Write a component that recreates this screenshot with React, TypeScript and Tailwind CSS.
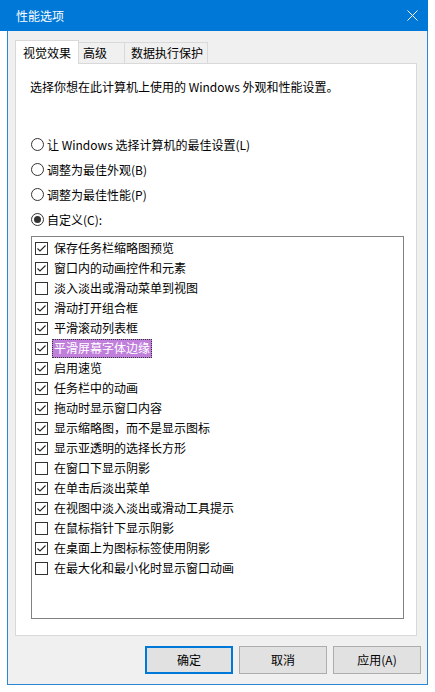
import React from 'react'

type Item = { label: string; checked: boolean; focused?: boolean }

const ITEMS: Item[] = [
  { label: '保存任务栏缩略图预览', checked: true },
  { label: '窗口内的动画控件和元素', checked: true },
  { label: '淡入淡出或滑动菜单到视图', checked: false },
  { label: '滑动打开组合框', checked: true },
  { label: '平滑滚动列表框', checked: true },
  { label: '平滑屏幕字体边缘', checked: true, focused: true },
  { label: '启用速览', checked: true },
  { label: '任务栏中的动画', checked: true },
  { label: '拖动时显示窗口内容', checked: true },
  { label: '显示缩略图，而不是显示图标', checked: true },
  { label: '显示亚透明的选择长方形', checked: true },
  { label: '在窗口下显示阴影', checked: false },
  { label: '在单击后淡出菜单', checked: true },
  { label: '在视图中淡入淡出或滑动工具提示', checked: true },
  { label: '在鼠标指针下显示阴影', checked: false },
  { label: '在桌面上为图标标签使用阴影', checked: true },
  { label: '在最大化和最小化时显示窗口动画', checked: false },
]

const RADIOS = [
  { label: '让 Windows 选择计算机的最佳设置(L)', selected: false },
  { label: '调整为最佳外观(B)', selected: false },
  { label: '调整为最佳性能(P)', selected: false },
  { label: '自定义(C):', selected: true },
]

function Checkbox({ checked }: { checked: boolean }) {
  return (
    <span className="flex h-[13px] w-[13px] shrink-0 items-center justify-center border border-[#333] bg-white">
      {checked && (
        <svg width="11" height="11" viewBox="0 0 11 11">
          <polyline points="1.5,5.5 4,8 9.5,2.5" fill="none" stroke="#222" strokeWidth="1.1" />
        </svg>
      )}
    </span>
  )
}

function Radio({ selected }: { selected: boolean }) {
  return (
    <span className="flex h-[13px] w-[13px] shrink-0 items-center justify-center rounded-full border border-[#333] bg-white">
      {selected && <span className="h-[7px] w-[7px] rounded-full bg-[#333]" />}
    </span>
  )
}

function Button({ children, primary }: { children: React.ReactNode; primary?: boolean }) {
  return (
    <button
      type="button"
      className={
        primary
          ? 'flex h-[28px] w-[88px] items-center justify-center border-2 border-[#0078d7] bg-[#e1e1e1] leading-none'
          : 'flex h-[28px] w-[88px] items-center justify-center border border-[#adadad] bg-[#e1e1e1] leading-none'
      }
    >
      {children}
    </button>
  )
}

export default function App() {
  return (
    <div className="h-[692px] w-[435px] bg-white font-['Noto_Sans_CJK_SC',sans-serif] text-[12px] text-black">
      <div className="w-[428px]">
        {/* Title bar */}
        <div className="flex h-[31px] items-center justify-between bg-[#0078d7] pl-[16px] pr-[10px] text-white">
          <span className="leading-none">性能选项</span>
          <svg width="11" height="11" viewBox="0 0 11 11">
            <path d="M0.5 0.5 L10.5 10.5 M10.5 0.5 L0.5 10.5" stroke="#fff" strokeWidth="1" />
          </svg>
        </div>

        {/* Body */}
        <div className="ml-[7px] h-[654px] border-x border-b border-[#2b86d6] bg-[#f0f0f0] pl-[7px] pt-[9px]">
          {/* Tabs */}
          <div className="flex h-[23px] items-end">
            <div className="relative z-10 -mb-px flex h-[24px] w-[64px] items-center justify-center border-x border-t border-[#d9d9d9] bg-white">
              视觉效果
            </div>
            <div className="flex h-[21px] w-[46px] items-center border-r border-t border-[#d9d9d9] pl-[4px]">
              高级
            </div>
            <div className="flex h-[21px] w-[83px] items-center border-r border-t border-[#d9d9d9] pl-[6px]">
              数据执行保护
            </div>
          </div>

          {/* Panel */}
          <div className="h-[573px] w-[402px] border border-[#d9d9d9] bg-white pl-[15px]">
            <p className="mt-[15px] h-[16px] leading-[16px] -ml-px">
              选择你想在此计算机上使用的 Windows 外观和性能设置。
            </p>

            <div className="mt-[37px]">
              {RADIOS.map((r) => (
                <div key={r.label} className="flex h-[25px] items-center gap-[3px]">
                  <Radio selected={r.selected} />
                  <span className="leading-none">{r.label}</span>
                </div>
              ))}
            </div>

            <div className="mt-[4px] h-[383px] w-[373px] border border-[#828282] bg-white pt-px">
              {ITEMS.map((it) => (
                <div key={it.label} className="flex h-[20px] items-center pl-[3px]">
                  <Checkbox checked={it.checked} />
                  <span
                    className={
                      it.focused
                        ? 'ml-[4px] flex h-[19px] items-center bg-[#bf7fdb] px-[2px] leading-none text-white outline-1 -outline-offset-1 outline-dotted outline-[#333]'
                        : 'ml-[4px] px-[2px] leading-none'
                    }
                  >
                    {it.label}
                  </span>
                </div>
              ))}
            </div>
          </div>

          {/* Buttons */}
          <div className="mt-[10px] flex gap-[6px] pl-[130px]">
            <Button primary>确定</Button>
            <Button>取消</Button>
            <Button>应用(A)</Button>
          </div>
        </div>
      </div>
    </div>
  )
}
